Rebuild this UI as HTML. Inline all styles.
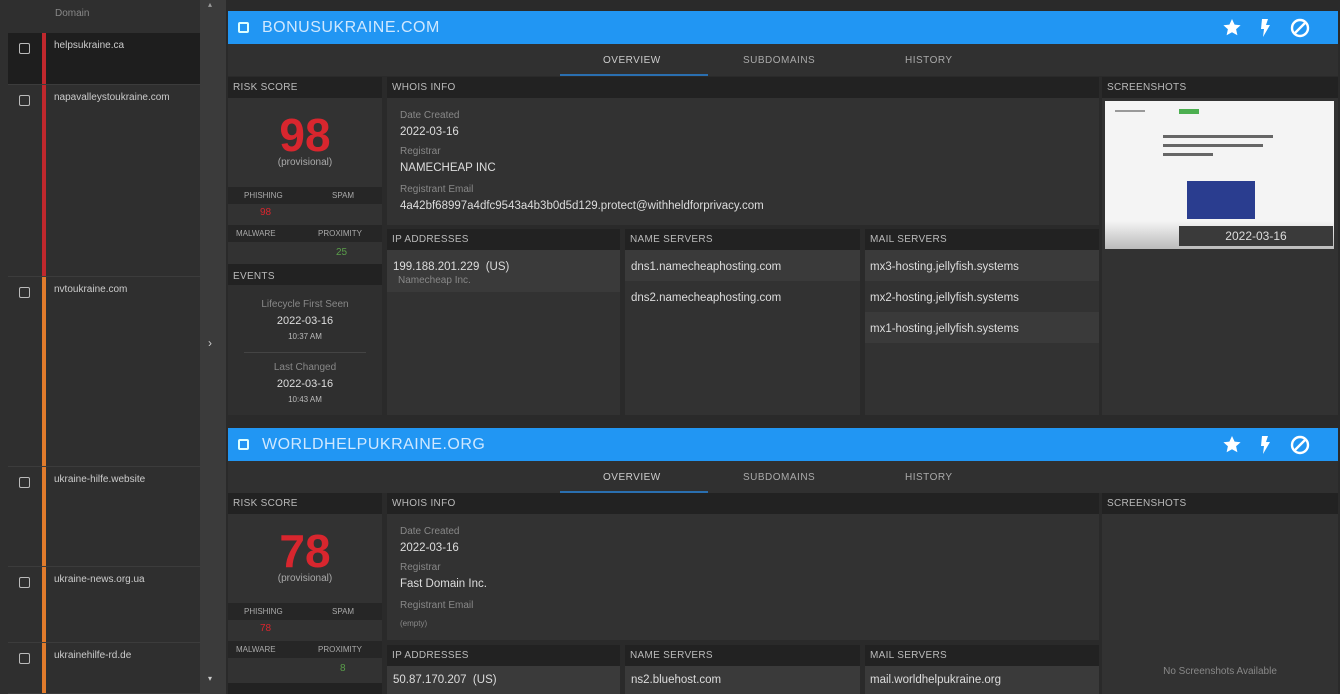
<!DOCTYPE html>
<html><head><meta charset="utf-8"><style>
*{box-sizing:border-box;margin:0;padding:0}
body{width:1340px;height:694px;overflow:hidden;background:#2a2a2a;font-family:"Liberation Sans",sans-serif;color:#ddd;position:relative}
.a{position:absolute}
.side{left:0;top:0;width:200px;height:694px;background:#2f2f2f}
.row{position:absolute;left:8px;width:192px;border-bottom:1px solid #3c3c3c}
.row .cb{position:absolute;left:11px;top:10px;width:11px;height:11px;border:1.5px solid #bbb;border-radius:2px}
.row .bar{position:absolute;left:34px;top:0;bottom:0;width:4px}
.row .t{position:absolute;left:46px;top:7px;font-size:10px;color:#ccc}
.gut{left:200px;top:0;width:26px;height:694px;background:#3b3b3b}
.hd{left:228px;height:33px;width:1110px;background:#2196f3;color:#cfe8ff;font-size:16px;letter-spacing:.5px}
.hd .cb{position:absolute;left:10px;top:11px;width:11px;height:11px;border:2px solid #dff;border-radius:2px}
.hd .n{position:absolute;left:34px;top:8px}
.tabs{left:228px;width:1110px;height:32px;background:#303030;font-size:10px;color:#aaa;letter-spacing:.5px}
.tabs span{position:absolute;top:11px}
.ul{position:absolute;left:332px;bottom:0;width:148px;height:2px;background:#2a6fb0}
.p{background:#323232}
.ph{height:21px;background:#222;font-size:10px;color:#bbb;padding:5px 5px;letter-spacing:.3px}
.lbl{font-size:10px;color:#888}
.val{font-size:11.5px;color:#ddd}
.sm{font-size:8px;color:#aaa;text-align:center}
.w{padding:10px 13px;line-height:16px}
.ev div{text-align:center;line-height:16px}
</style></head><body>
<div class="a side">
<div class="a" style="left:55px;top:8px;font-size:10px;color:#888">Domain</div>
<div class="row" style="top:33px;height:52px;background:#1e1e1e"><div class="cb"></div><div class="bar" style="background:#c0282d"></div><div class="t">helpsukraine.ca</div></div>
<div class="row" style="top:85px;height:192px"><div class="cb"></div><div class="bar" style="background:#c0282d"></div><div class="t">napavalleystoukraine.com</div></div>
<div class="row" style="top:277px;height:190px"><div class="cb"></div><div class="bar" style="background:#e07b2c"></div><div class="t">nvtoukraine.com</div></div>
<div class="row" style="top:467px;height:100px"><div class="cb"></div><div class="bar" style="background:#e07b2c"></div><div class="t">ukraine-hilfe.website</div></div>
<div class="row" style="top:567px;height:76px"><div class="cb"></div><div class="bar" style="background:#e07b2c"></div><div class="t">ukraine-news.org.ua</div></div>
<div class="row" style="top:643px;height:51px"><div class="cb"></div><div class="bar" style="background:#e07b2c"></div><div class="t">ukrainehilfe-rd.de</div></div>
</div>
<div class="a gut"><div class="a" style="left:8px;top:0;font-size:8px;color:#999">▴</div><div class="a" style="left:8px;top:336px;font-size:12px;color:#ccc">›</div><div class="a" style="left:8px;top:674px;font-size:8px;color:#ccc">▾</div></div>

<!-- card 1 -->
<div class="a hd" style="top:11px"><div class="cb"></div><div class="n">BONUSUKRAINE.COM</div>
<svg class="a" style="left:994px;top:7px" width="100" height="20" viewBox="0 0 100 20"><path d="M10 1l2.6 5.6 6 .6-4.5 4 1.3 6L10 14.2 4.6 17.2l1.3-6-4.5-4 6-.6z" fill="#fff"/><path d="M40 1h6l-2 6h4l-7 12 1-8h-3z" fill="#fff"/><circle cx="78" cy="10" r="8" fill="none" stroke="#fff" stroke-width="2.4"/><path d="M73 15l10-10" stroke="#fff" stroke-width="2.4"/></svg></div>
<div class="a tabs" style="top:44px"><span style="left:375px;color:#ccc">OVERVIEW</span><span style="left:515px">SUBDOMAINS</span><span style="left:677px">HISTORY</span><div class="ul"></div></div>
<div class="a p" style="left:228px;top:77px;width:154px;height:338px">
<div class="ph">RISK SCORE</div>
<div style="text-align:center;font-size:46px;font-weight:bold;color:#d8262e;margin-top:13px;line-height:48px">98</div>
<div class="sm" style="font-size:10px;margin-top:-2px">(provisional)</div>
<div class="a" style="top:110px;left:0;width:154px;height:17px;background:#262626"><span class="sm a" style="left:16px;top:4px">PHISHING</span><span class="sm a" style="left:104px;top:4px">SPAM</span></div>
<div class="a" style="top:130px;left:32px;font-size:10px;color:#d8262e">98</div>
<div class="a" style="top:148px;left:0;width:154px;height:17px;background:#262626"><span class="sm a" style="left:8px;top:4px">MALWARE</span><span class="sm a" style="left:90px;top:4px">PROXIMITY</span></div>
<div class="a" style="top:170px;left:108px;font-size:10px;color:#5a9e4a">25</div>
<div class="a ev" style="top:187px;left:0;width:154px;height:151px;background:#2f2f2f">
<div class="ph" style="text-align:left">EVENTS</div>
<div style="font-size:10px;color:#888;margin-top:12px">Lifecycle First Seen</div>
<div style="font-size:11px;color:#ddd">2022-03-16</div>
<div style="font-size:8px;color:#bbb">10:37 AM</div>
<div style="margin:7px 16px 7px;border-top:1px solid #444;height:0"></div>
<div style="font-size:10px;color:#888">Last Changed</div>
<div style="font-size:11px;color:#ddd">2022-03-16</div>
<div style="font-size:8px;color:#bbb">10:43 AM</div></div>
</div>
<div class="a p" style="left:387px;top:77px;width:712px;height:148px">
<div class="ph">WHOIS INFO</div>
<div class="w"><div class="lbl">Date Created</div><div class="val">2022-03-16</div><div class="lbl" style="margin-top:4px">Registrar</div><div class="val">NAMECHEAP INC</div><div class="lbl" style="margin-top:6px">Registrant Email</div><div class="val">4a42bf68997a4dfc9543a4b3b0d5d129.protect@withheldforprivacy.com</div></div></div>
<div class="a p" style="left:387px;top:229px;width:233px;height:186px"><div class="ph">IP ADDRESSES</div>
<div style="background:#3a3a3a;height:42px;padding:10px 6px;line-height:14px"><div class="val">199.188.201.229 &nbsp;(US)</div><div class="lbl" style="padding-left:5px">Namecheap Inc.</div></div></div>
<div class="a p" style="left:625px;top:229px;width:235px;height:186px"><div class="ph">NAME SERVERS</div>
<div class="val" style="background:#3a3a3a;height:31px;padding:11px 6px">dns1.namecheaphosting.com</div><div class="val" style="height:31px;padding:11px 6px">dns2.namecheaphosting.com</div></div>
<div class="a p" style="left:865px;top:229px;width:234px;height:186px"><div class="ph">MAIL SERVERS</div>
<div class="val" style="background:#3a3a3a;height:31px;padding:11px 5px">mx3-hosting.jellyfish.systems</div><div class="val" style="height:31px;padding:11px 5px">mx2-hosting.jellyfish.systems</div><div class="val" style="background:#3a3a3a;height:31px;padding:11px 5px">mx1-hosting.jellyfish.systems</div></div>
<div class="a p" style="left:1102px;top:77px;width:236px;height:338px"><div class="ph">SCREENSHOTS</div>
<div class="a" style="left:3px;top:24px;width:229px;height:148px;background:#f4f4f4">
<div class="a" style="left:10px;top:9px;width:30px;height:2px;background:#999"></div>
<div class="a" style="left:74px;top:8px;width:20px;height:5px;background:#4caf50"></div>
<div class="a" style="left:58px;top:34px;width:110px;height:3px;background:#666"></div><div class="a" style="left:58px;top:43px;width:100px;height:3px;background:#666"></div><div class="a" style="left:58px;top:52px;width:50px;height:3px;background:#666"></div>
<div class="a" style="left:82px;top:80px;width:68px;height:38px;background:#2a3d8f"></div>
<div class="a" style="left:0;top:120px;width:229px;height:28px;background:linear-gradient(#f4f4f4,#bbb)"></div>
<div class="a" style="left:74px;top:125px;width:154px;height:20px;background:#3a3a3a;color:#ddd;font-size:12px;text-align:center;padding-top:3px">2022-03-16</div></div></div>

<!-- card 2 -->
<div class="a hd" style="top:428px"><div class="cb"></div><div class="n">WORLDHELPUKRAINE.ORG</div>
<svg class="a" style="left:994px;top:7px" width="100" height="20" viewBox="0 0 100 20"><path d="M10 1l2.6 5.6 6 .6-4.5 4 1.3 6L10 14.2 4.6 17.2l1.3-6-4.5-4 6-.6z" fill="#fff"/><path d="M40 1h6l-2 6h4l-7 12 1-8h-3z" fill="#fff"/><circle cx="78" cy="10" r="8" fill="none" stroke="#fff" stroke-width="2.4"/><path d="M73 15l10-10" stroke="#fff" stroke-width="2.4"/></svg></div>
<div class="a tabs" style="top:461px"><span style="left:375px;color:#ccc">OVERVIEW</span><span style="left:515px">SUBDOMAINS</span><span style="left:677px">HISTORY</span><div class="ul"></div></div>
<div class="a p" style="left:228px;top:493px;width:154px;height:201px">
<div class="ph">RISK SCORE</div>
<div style="text-align:center;font-size:46px;font-weight:bold;color:#d8262e;margin-top:13px;line-height:48px">78</div>
<div class="sm" style="font-size:10px;margin-top:-2px">(provisional)</div>
<div class="a" style="top:110px;left:0;width:154px;height:17px;background:#262626"><span class="sm a" style="left:16px;top:4px">PHISHING</span><span class="sm a" style="left:104px;top:4px">SPAM</span></div>
<div class="a" style="top:130px;left:32px;font-size:10px;color:#d8262e">78</div>
<div class="a" style="top:148px;left:0;width:154px;height:17px;background:#262626"><span class="sm a" style="left:8px;top:4px">MALWARE</span><span class="sm a" style="left:90px;top:4px">PROXIMITY</span></div>
<div class="a" style="top:170px;left:112px;font-size:10px;color:#5a9e4a">8</div>
<div class="a" style="top:190px;left:0;width:154px;height:11px;background:#222"></div></div>
<div class="a p" style="left:387px;top:493px;width:712px;height:147px">
<div class="ph">WHOIS INFO</div>
<div class="w"><div class="lbl">Date Created</div><div class="val">2022-03-16</div><div class="lbl" style="margin-top:4px">Registrar</div><div class="val">Fast Domain Inc.</div><div class="lbl" style="margin-top:6px">Registrant Email</div><div class="lbl" style="font-size:8px;margin-top:2px">(empty)</div></div></div>
<div class="a p" style="left:387px;top:645px;width:233px;height:49px"><div class="ph">IP ADDRESSES</div><div class="val" style="background:#3a3a3a;height:28px;padding:8px 6px">50.87.170.207 &nbsp;(US)</div></div>
<div class="a p" style="left:625px;top:645px;width:235px;height:49px"><div class="ph">NAME SERVERS</div><div class="val" style="background:#3a3a3a;height:28px;padding:8px 6px">ns2.bluehost.com</div></div>
<div class="a p" style="left:865px;top:645px;width:234px;height:49px"><div class="ph">MAIL SERVERS</div><div class="val" style="background:#3a3a3a;height:28px;padding:8px 5px">mail.worldhelpukraine.org</div></div>
<div class="a p" style="left:1102px;top:493px;width:236px;height:201px"><div class="ph">SCREENSHOTS</div><div class="a" style="left:0;width:236px;top:173px;text-align:center;font-size:10px;color:#888">No Screenshots Available</div></div>
</body></html>
